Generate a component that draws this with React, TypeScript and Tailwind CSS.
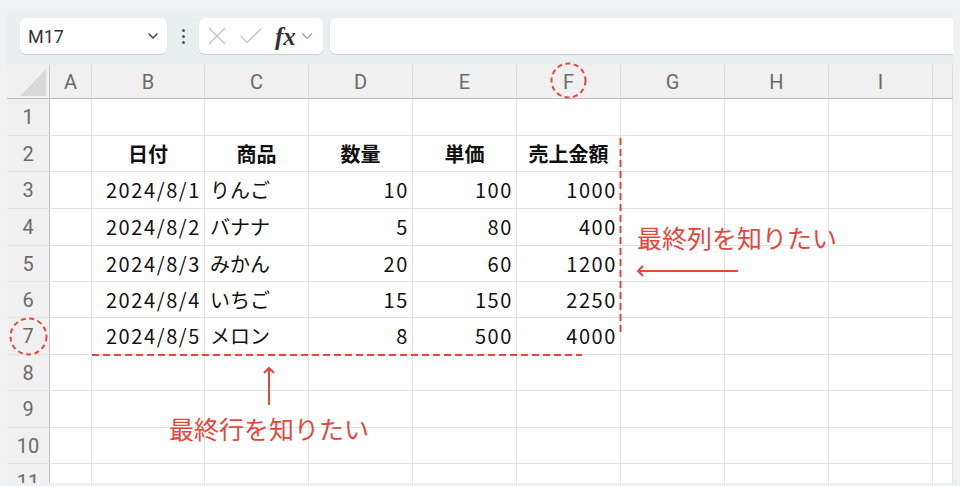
const cellFont = { fontFamily: '"Noto Sans CJK JP", "Noto Sans", sans-serif' };

const W = [
  "w-[43px]",
  "w-[42px]",
  "w-[113px]",
  "w-[104px]",
  "w-[104px]",
  "w-[104px]",
  "w-[104px]",
  "w-[104px]",
  "w-[104px]",
  "w-[104px]",
  "flex-1",
];

const H = [
  "h-[37px]",
  "h-[36px]",
  "h-[37px]",
  "h-[37px]",
  "h-[36px]",
  "h-[36px]",
  "h-[37px]",
  "h-[36px]",
  "h-[37px]",
  "h-[36px]",
  "h-[37px]",
];

const letters = ["A", "B", "C", "D", "E", "F", "G", "H", "I", ""];

type Cell = { t: string; a: "l" | "r" | "c"; b?: boolean; n?: boolean } | null;

const rows: Record<number, Cell[]> = {
  2: [null, { t: "日付", a: "c", b: true }, { t: "商品", a: "c", b: true }, { t: "数量", a: "c", b: true }, { t: "単価", a: "c", b: true }, { t: "売上金額", a: "c", b: true }],
  3: [null, { t: "2024/8/1", a: "r", n: true }, { t: "りんご", a: "l" }, { t: "10", a: "r", n: true }, { t: "100", a: "r", n: true }, { t: "1000", a: "r", n: true }],
  4: [null, { t: "2024/8/2", a: "r", n: true }, { t: "バナナ", a: "l" }, { t: "5", a: "r", n: true }, { t: "80", a: "r", n: true }, { t: "400", a: "r", n: true }],
  5: [null, { t: "2024/8/3", a: "r", n: true }, { t: "みかん", a: "l" }, { t: "20", a: "r", n: true }, { t: "60", a: "r", n: true }, { t: "1200", a: "r", n: true }],
  6: [null, { t: "2024/8/4", a: "r", n: true }, { t: "いちご", a: "l" }, { t: "15", a: "r", n: true }, { t: "150", a: "r", n: true }, { t: "2250", a: "r", n: true }],
  7: [null, { t: "2024/8/5", a: "r", n: true }, { t: "メロン", a: "l" }, { t: "8", a: "r", n: true }, { t: "500", a: "r", n: true }, { t: "4000", a: "r", n: true }],
};

function Toolbar() {
  return (
    <div className="flex h-[54px] items-start bg-[#e9eef1] pl-[13px] pt-[7px]">
      {/* name box */}
      <div className="flex h-[36px] w-[147px] items-center justify-between rounded-md bg-white pl-[8px] pr-[8px] shadow-[0_1px_1px_rgba(0,0,0,0.14)]">
        <span className="text-[18px] text-[#333]" style={{ fontFamily: "Roboto, sans-serif" }}>M17</span>
        <svg width="12" height="8" viewBox="0 0 12 8">
          <path d="M1.5 1.5 L6 6 L10.5 1.5" fill="none" stroke="#444" strokeWidth="1.5" />
        </svg>
      </div>
      <div className="flex h-[36px] w-[32px] flex-col items-center justify-center gap-[3px]">
        <span className="h-[3px] w-[3px] rounded-full bg-[#555]" />
        <span className="h-[3px] w-[3px] rounded-full bg-[#555]" />
        <span className="h-[3px] w-[3px] rounded-full bg-[#555]" />
      </div>
      {/* cancel / enter / fx */}
      <div className="flex h-[36px] w-[124px] items-center rounded-md bg-white pl-[8px] shadow-[0_1px_1px_rgba(0,0,0,0.14)]">
        <svg width="20" height="20" viewBox="0 0 20 20">
          <path d="M2 2 L18 18 M18 2 L2 18" stroke="#c4c4c4" strokeWidth="1.4" />
        </svg>
        <svg width="24" height="18" viewBox="0 0 24 18" className="ml-[12px]">
          <path d="M1.5 9 L8 15.5 L22.5 1.5" fill="none" stroke="#c4c4c4" strokeWidth="1.4" />
        </svg>
        <span
          className="ml-[12px] text-[25px] font-bold italic leading-none text-[#333]"
          style={{ fontFamily: '"Liberation Serif", serif' }}
        >
          fx
        </span>
        <svg width="12" height="8" viewBox="0 0 12 8" className="ml-[5px]">
          <path d="M1 1.5 L6 6.5 L11 1.5" fill="none" stroke="#9a9a9a" strokeWidth="1.2" />
        </svg>
      </div>
      <div className="ml-[7px] h-[36px] flex-1 rounded-l-md bg-white shadow-[0_1px_1px_rgba(0,0,0,0.14)]" />
    </div>
  );
}

function HeaderRow() {
  return (
    <div className="flex h-[34px] bg-[#f0f0f0]">
      <div className={`${W[0]} relative shrink-0 border-b border-r border-b-[#bdbdbd] border-r-[#c6c6c6]`}>
        <svg width="27" height="27" viewBox="0 0 27 27" className="absolute left-[13px] top-[4px]">
          <path d="M26 0 L26 27 L0 27 Z" fill="#d9d9d9" />
        </svg>
      </div>
      {letters.map((l, i) => (
        <div
          key={i}
          className={`${W[i + 1]} flex shrink-0 items-center justify-center border-b border-r border-b-[#bdbdbd] border-r-[#dadada] text-[20px] text-[#6a6a6a]`}
          style={{ fontFamily: "Roboto, sans-serif" }}
        >
          {l}
        </div>
      ))}
    </div>
  );
}

function Row({ r }: { r: number }) {
  const cells = rows[r] ?? [];
  return (
    <div className={`flex ${H[r - 1]}`}>
      <div
        className={`${W[0]} flex shrink-0 items-center justify-center border-b border-r border-b-[#e2e2e2] border-r-[#c6c6c6] bg-[#f0f0f0] text-[20px] text-[#6a6a6a]`}
        style={{ fontFamily: "Roboto, sans-serif" }}
      >
        {r}
      </div>
      {letters.map((_, i) => {
        const c = cells[i];
        const align = c
          ? c.a === "r"
            ? "justify-end pr-[3px]"
            : c.a === "l"
              ? "justify-start pl-[5px]"
              : "justify-center"
          : "";
        return (
          <div
            key={i}
            className={`${W[i + 1]} flex shrink-0 items-center border-b border-r border-[#e2e2e2] bg-white text-[20px] text-[#111] ${align} ${c?.b ? "font-bold" : ""} ${c?.n ? "tracking-[1.6px]" : ""}`}
            style={cellFont}
          >
            {c?.t}
          </div>
        );
      })}
    </div>
  );
}

export default function App() {
  const red = "#e5473d";
  return (
    <div className="relative h-[486px] w-[960px] overflow-hidden bg-[#eff1f3]">
      <div className="ml-[7px] mt-[11px] h-[472px] w-[946px] overflow-hidden">
        <Toolbar />
        <HeaderRow />
        {[1, 2, 3, 4, 5, 6, 7, 8, 9, 10, 11].map((r) => (
          <Row key={r} r={r} />
        ))}
      </div>

      {/* annotations */}
      <svg width="960" height="486" className="pointer-events-none absolute left-0 top-0">
        <circle cx="568.5" cy="80.5" r="17" fill="none" stroke={red} strokeWidth="2" strokeDasharray="5 3.5" />
        <circle cx="28.5" cy="336.5" r="18" fill="none" stroke={red} strokeWidth="2" strokeDasharray="5 3.5" />
        <line x1="620.5" y1="138" x2="620.5" y2="334" stroke={red} strokeWidth="2" strokeDasharray="7 4" />
        <line x1="92" y1="355" x2="582" y2="355" stroke={red} strokeWidth="2" strokeDasharray="7 4" />
        <line x1="269" y1="368" x2="269" y2="405" stroke={red} strokeWidth="2" />
        <path d="M264 373 L269 368 L274 373" fill="none" stroke={red} strokeWidth="2" />
        <line x1="638" y1="271" x2="738" y2="271" stroke={red} strokeWidth="2" />
        <path d="M643 266 L638 271 L643 276" fill="none" stroke={red} strokeWidth="2" />
      </svg>
      <span
        className="absolute left-[637px] top-[222px] text-[25px] leading-[30px] text-[#e5473d]"
        style={cellFont}
      >
        最終列を知りたい
      </span>
      <span
        className="absolute left-[169px] top-[413px] text-[25px] leading-[30px] text-[#e5473d]"
        style={cellFont}
      >
        最終行を知りたい
      </span>
    </div>
  );
}
